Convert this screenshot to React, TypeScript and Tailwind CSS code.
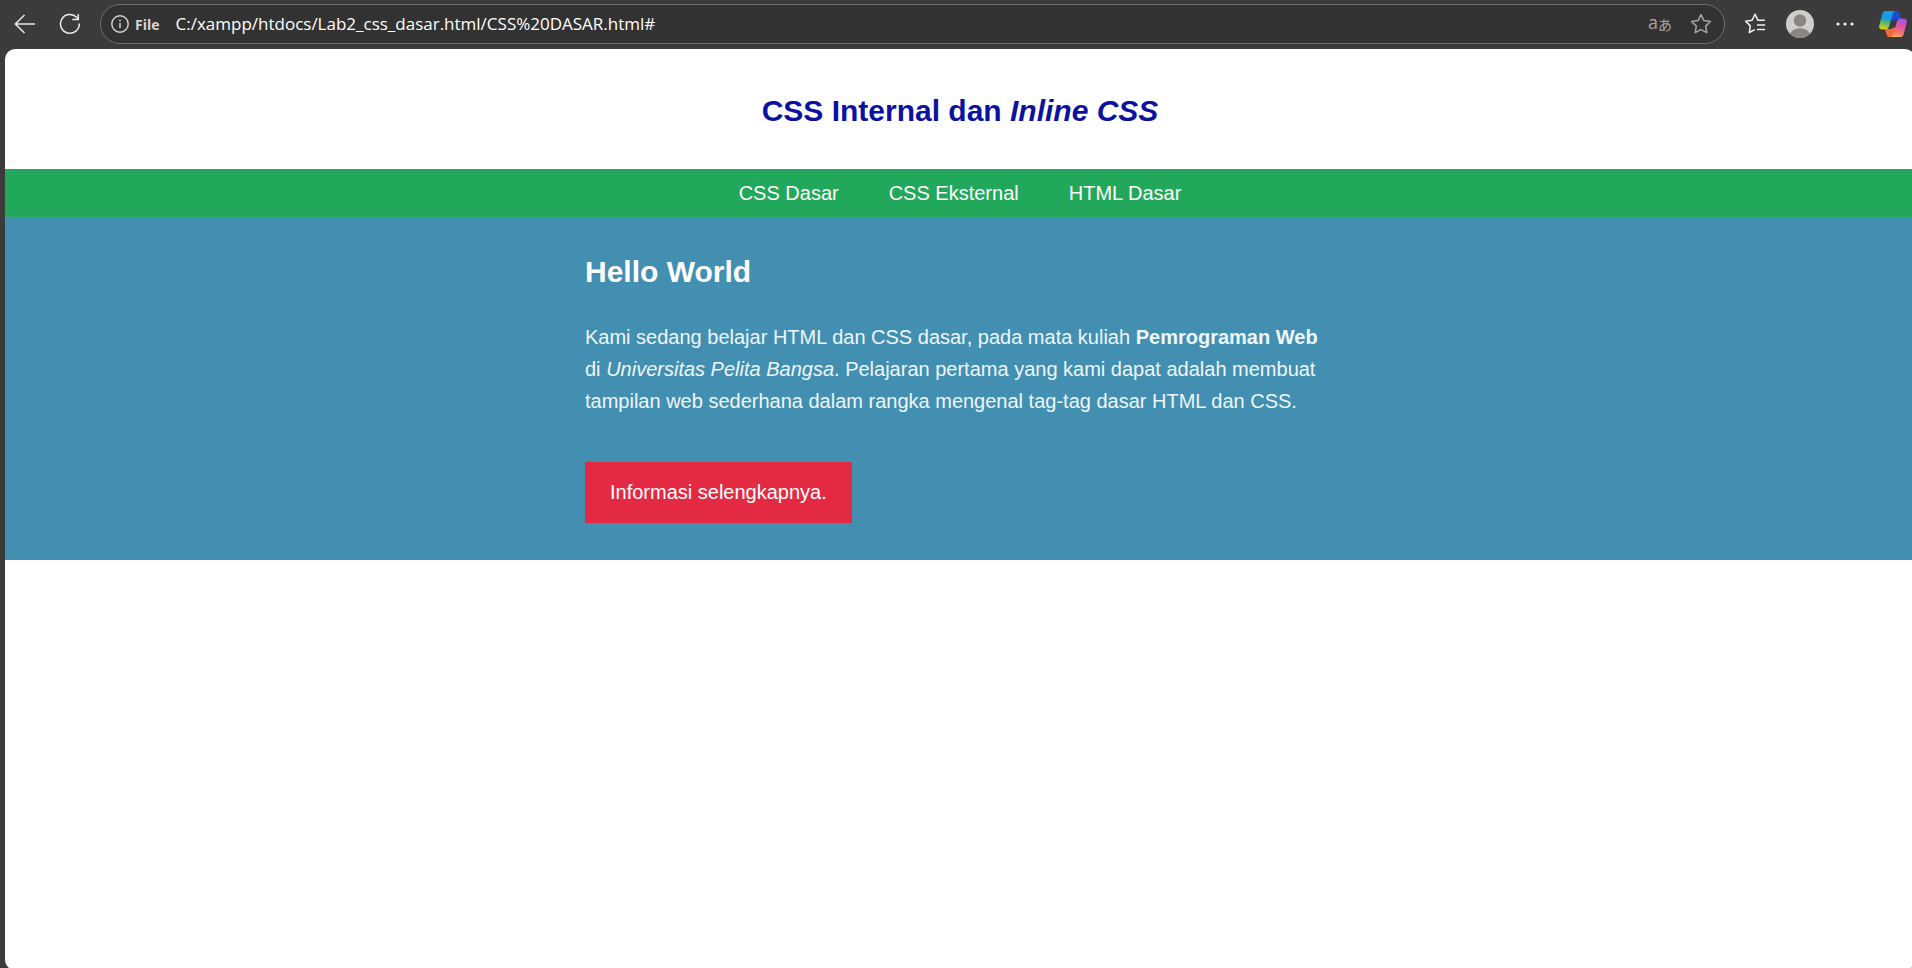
function BackIcon() {
  return (
    <svg width="22" height="20" viewBox="0 0 22 20" fill="none" stroke="#ececec" strokeWidth="1.5" aria-hidden="true">
      <path d="M21 10H1.5M10.5 1L1.3 10l9.2 9" strokeLinejoin="round" />
    </svg>
  );
}

function ReloadIcon() {
  return (
    <svg width="22" height="22" viewBox="0 0 22 22" fill="none" stroke="#ececec" strokeWidth="1.5" aria-hidden="true">
      <path d="M20.3 10.5A9.4 9.4 0 1 1 17.6 4.3L19.3 6.2" />
      <path d="M19.3 1v5.5h-6" />
    </svg>
  );
}

function InfoIcon() {
  return (
    <svg width="18" height="18" viewBox="0 0 18 18" fill="none" stroke="#d6d6d6" strokeWidth="1.4" aria-hidden="true">
      <circle cx="9" cy="9" r="8.2" />
      <path d="M9 8v5" />
      <circle cx="9" cy="5.5" r="0.9" fill="#d6d6d6" stroke="none" />
    </svg>
  );
}

function StarIcon() {
  return (
    <svg width="22" height="22" viewBox="0 0 22 22" fill="none" stroke="#a6a6a6" strokeWidth="1.5" strokeLinejoin="round" aria-hidden="true">
      <path d="M11 1.6l2.9 6 6.5.9-4.7 4.6 1.1 6.6-5.8-3.1-5.8 3.1 1.1-6.6L1.6 8.5l6.5-.9z" />
    </svg>
  );
}

function FavoritesIcon() {
  return (
    <svg width="22" height="22" viewBox="0 0 22 22" fill="none" stroke="#f2f2f2" strokeWidth="1.5" strokeLinejoin="round" strokeLinecap="round" aria-hidden="true">
      <path d="M20.3 7.3H14L11 1.2 8.1 7.3l-6.5 1 4.7 4.6-1 6.6 5-2.7" />
      <path d="M13.5 12h7M13.5 16.5h7" />
    </svg>
  );
}

function ProfileIcon() {
  return (
    <svg width="28" height="28" viewBox="0 0 28 28" aria-hidden="true">
      <clipPath id="profile-circle">
        <circle cx="14" cy="14" r="14" />
      </clipPath>
      <g clipPath="url(#profile-circle)">
        <rect width="28" height="28" fill="#d0cec9" />
        <circle cx="14" cy="10.5" r="6.2" fill="#8a8682" />
        <ellipse cx="14" cy="25.5" rx="10" ry="7.3" fill="#8a8682" />
      </g>
    </svg>
  );
}

function MoreIcon() {
  return (
    <svg width="18" height="4" viewBox="0 0 18 4" fill="#f2f2f2" aria-hidden="true">
      <circle cx="2" cy="2" r="1.6" />
      <circle cx="9" cy="2" r="1.6" />
      <circle cx="16" cy="2" r="1.6" />
    </svg>
  );
}

function CopilotIcon() {
  return (
    <svg width="28" height="26" viewBox="0 0 28 26" aria-hidden="true">
      <defs>
        <linearGradient id="cp-left" x1="0.5" y1="0" x2="0.3" y2="1">
          <stop offset="0" stopColor="#14a0ee" />
          <stop offset="0.4" stopColor="#1c98d8" />
          <stop offset="0.7" stopColor="#6dbd58" />
          <stop offset="1" stopColor="#f0cf12" />
        </linearGradient>
        <linearGradient id="cp-right" x1="0.6" y1="0" x2="0.4" y2="1">
          <stop offset="0" stopColor="#a650ea" />
          <stop offset="0.45" stopColor="#e3569f" />
          <stop offset="0.8" stopColor="#fb7b68" />
          <stop offset="1" stopColor="#fdae58" />
        </linearGradient>
      </defs>
      <path d="M12 0h5.300c1.900 0 2.700 1 3.200 2.600L22 8h-4.500c-2 0-3 .6-3.600 2L11 8z" fill="#1c4fd0" />
      <path d="M16 26h-5.300c-1.900 0-2.700-1-3.200-2.600L6 18h4.500c2 0 3-.6 3.600-2L17 18z" fill="#f06a3e" />
      <path d="M7 0h9.500c-1.600.2-2.300 1.400-2.800 3l-3.600 12.500c-.6 1.900-1.600 3-3.700 3H3.500C.8 18.500-.3 16.800.3 14.200L3.200 3.300C3.800 1 4.800 0 7 0z" fill="url(#cp-left)" />
      <path d="M21 26h-9.500c1.600-.2 2.300-1.400 2.800-3l3.600-12.500c.6-1.900 1.600-3 3.700-3h2.900c2.700 0 3.800 1.700 3.200 4.300l-2.900 10.900C24.200 25 23.200 26 21 26z" fill="url(#cp-right)" />
    </svg>
  );
}

function BrowserToolbar() {
  return (
    <header className="flex h-[49px] shrink-0 items-center bg-[#3b3b3b] pr-[5px] pb-px pl-[14px]">
      <button type="button" aria-label="Back" className="mr-[23px] shrink-0">
        <BackIcon />
      </button>
      <button type="button" aria-label="Refresh" className="mr-[19px] shrink-0">
        <ReloadIcon />
      </button>
      <div className="flex h-10 min-w-0 flex-1 items-center rounded-full border border-[#6e6e6e] bg-[#323232] pr-3 pl-[10px]">
        <button type="button" className="flex items-center gap-[6px] text-[14px] font-bold text-[#d6d6d6]">
          <InfoIcon />
          File
        </button>
        <input
          type="text"
          aria-label="Address"
          defaultValue="C:/xampp/htdocs/Lab2_css_dasar.html/CSS%20DASAR.html#"
          className="ml-4 min-w-0 flex-1 bg-transparent text-[17px] text-white outline-none"
        />
        <button type="button" aria-label="Translate" className="mr-[18px] flex items-center text-[#a6a6a6]">
          <span className="pb-1 text-[18px] leading-5">a</span>
          <span className="font-['Noto_Sans_CJK_JP',sans-serif] text-[14px] leading-5">あ</span>
        </button>
        <button type="button" aria-label="Add to favorites">
          <StarIcon />
        </button>
      </div>
      <button type="button" aria-label="Favorites" className="ml-[19px] shrink-0">
        <FavoritesIcon />
      </button>
      <button type="button" aria-label="Profile" className="ml-5 shrink-0">
        <ProfileIcon />
      </button>
      <button type="button" aria-label="Settings and more" className="ml-[22px] flex shrink-0">
        <MoreIcon />
      </button>
      <button type="button" aria-label="Copilot" className="ml-[25px] shrink-0">
        <CopilotIcon />
      </button>
    </header>
  );
}

const links = ["CSS Dasar", "CSS Eksternal", "HTML Dasar"];

export default function App() {
  return (
    <div className="flex h-screen flex-col overflow-hidden bg-[#3b3b3b] font-['Open_Sans',sans-serif]">
      <BrowserToolbar />
      <div className="-mr-[3px] -mb-0.5 ml-[5px] flex-1 overflow-hidden rounded-[10px] bg-white font-['Liberation_Sans',Arial,sans-serif] text-[20px]">
        <h1 className="flex h-[120px] items-center justify-center pt-0.5 text-[30px] font-bold text-[#0c12a0]">
          <span>
            CSS Internal dan <i>Inline CSS</i>
          </span>
        </h1>
        <nav className="flex h-12 items-center justify-center bg-[#22a85a] text-white">
          {links.map((label) => (
            <a key={label} href="#" className="px-[25px]">
              {label}
            </a>
          ))}
        </nav>
        <main className="bg-[#428fb2] pt-8 pb-[37px]">
          <div className="mx-auto max-w-[750px]">
            <h2 className="text-[30px] leading-[46px] font-bold text-white">Hello World</h2>
            <p className="mt-[26px] mb-[45px] leading-8 text-[#eef7fb]">
              Kami sedang belajar HTML dan CSS dasar, pada mata kuliah <b>Pemrograman Web</b> di{" "}
              <i>Universitas Pelita Bangsa</i>. Pelajaran pertama yang kami dapat adalah membuat tampilan web sederhana
              dalam rangka mengenal tag-tag dasar HTML dan CSS.
            </p>
            <a href="#" className="flex h-[61px] w-fit items-center bg-[#e42a42] px-[25px] pb-0.5 text-white">
              Informasi selengkapnya.
            </a>
          </div>
        </main>
      </div>
    </div>
  );
}
